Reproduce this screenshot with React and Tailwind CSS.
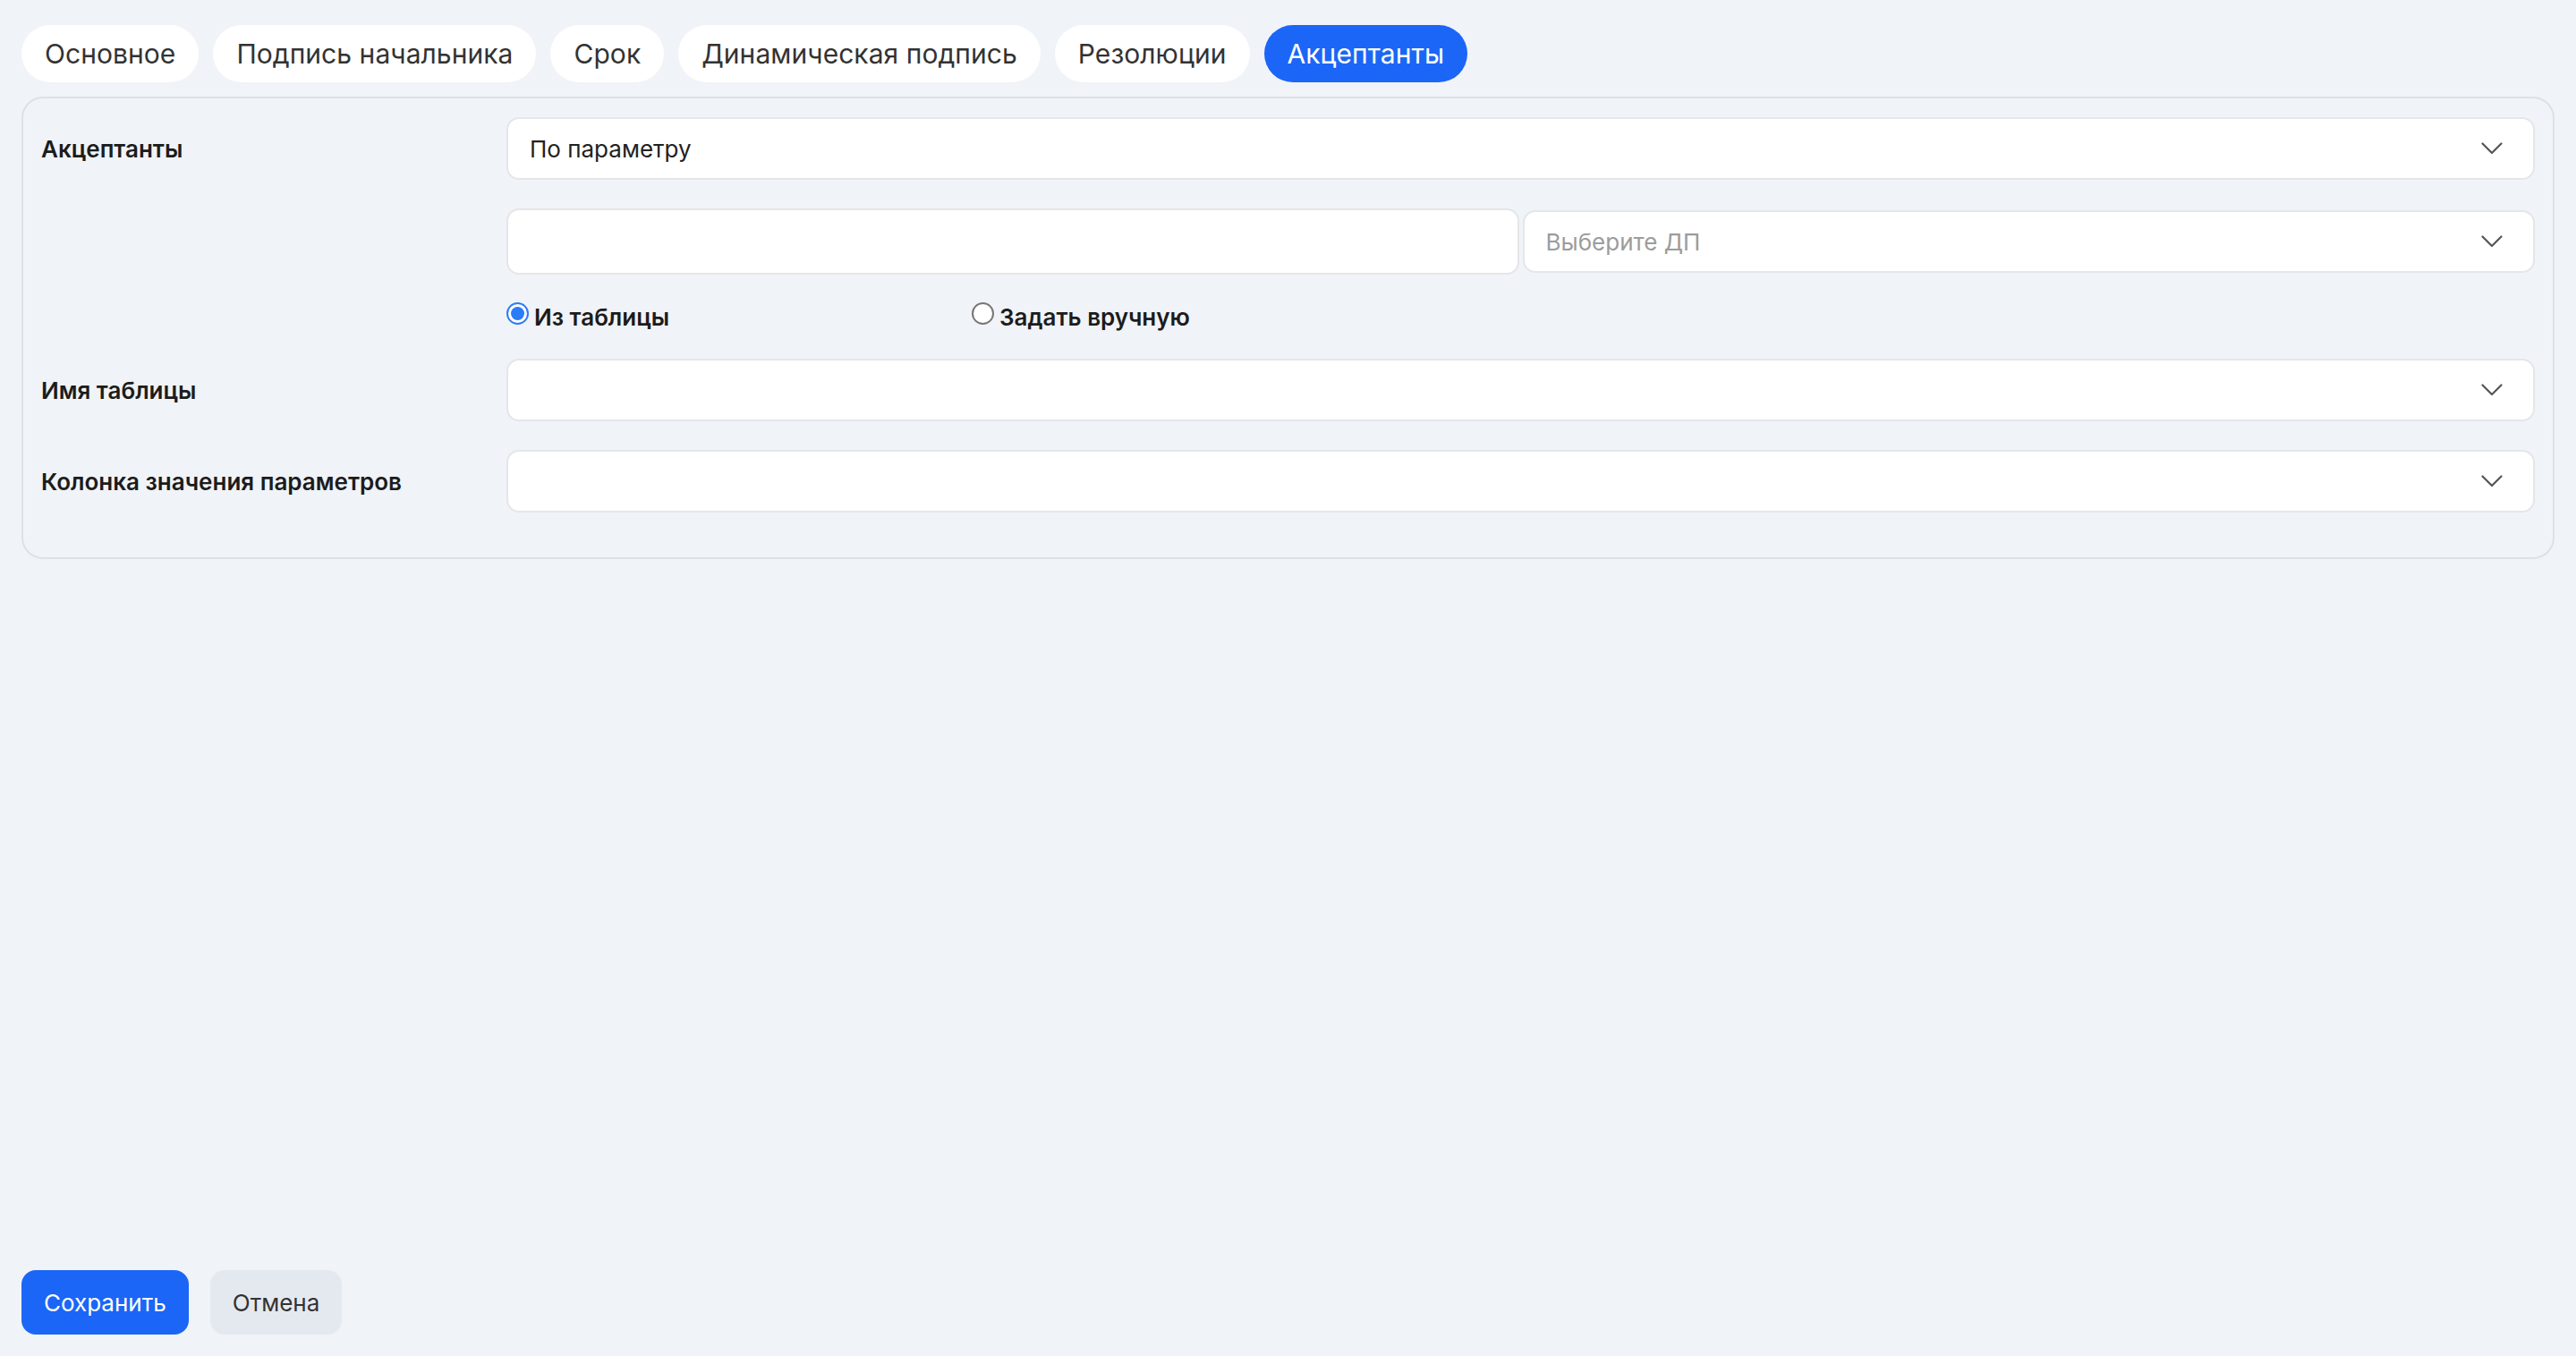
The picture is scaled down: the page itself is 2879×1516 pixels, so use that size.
import React from "react";

const tabs = ["Основное", "Подпись начальника", "Срок", "Динамическая подпись", "Резолюции", "Акцептанты"];

function Chevron() {
  return (
    <svg width="24" height="14" viewBox="0 0 24 14" fill="none" className="shrink-0">
      <path d="M1.5 1.5 L12 12 L22.5 1.5" stroke="#555" strokeWidth="2.2" strokeLinecap="round" strokeLinejoin="round" />
    </svg>
  );
}

function Select({ value, placeholder, className = "" }) {
  return (
    <div className={"flex h-[70px] min-w-0 items-center justify-between rounded-[14px] border-2 border-[#e4e6e9] bg-white pl-[24px] pr-[34px] " + className}>
      {value ? (
        <span className="text-[26px] text-[#222]">{value}</span>
      ) : (
        <span className="text-[26px] text-[#9c9c9c]">{placeholder || ""}</span>
      )}
      <Chevron />
    </div>
  );
}

function Label({ children }) {
  return <div className="w-[520px] shrink-0 text-[26px] font-semibold text-[#1c1c1c]">{children}</div>;
}

export default function App() {
  return (
    <div
      className="flex h-screen flex-col bg-[#f0f3f7] px-[24px] pt-[28px] pb-[24px]"
      style={{ fontFamily: "Inter, 'Noto Sans', sans-serif" }}
    >
      <div className="flex gap-[16px]">
        {tabs.map((t, i) => (
          <div
            key={t}
            className={
              "flex h-[64px] items-center rounded-full px-[26px] text-[30px] tracking-[0.05px] " +
              (i === tabs.length - 1 ? "bg-[#1b66f6] text-white" : "bg-white text-[#333]")
            }
          >
            {t}
          </div>
        ))}
      </div>

      <div className="mt-[16px] rounded-[24px] border-2 border-[#dde1e6] px-[20px] pt-[21px] pb-[50px]">
        <div className="flex items-center">
          <Label>Акцептанты</Label>
          <Select value="По параметру" className="flex-1" />
        </div>

        <div className="mt-[32px] flex items-center">
          <div className="w-[520px] shrink-0" />
          <div className="grid flex-1 grid-cols-2 items-center gap-[4px]">
            <div className="h-[74px] rounded-[14px] border-2 border-[#e4e6e9] bg-white" />
            <Select placeholder="Выберите ДП" />
          </div>
        </div>

        <div className="mt-[32px] flex">
          <div className="w-[520px] shrink-0" />
          <div className="flex w-[520px] items-start gap-[6px]">
            <div className="mt-[-1px] flex h-[25px] w-[25px] items-center justify-center rounded-full border-[2.5px] border-[#2a7cf7] bg-white">
              <div className="h-[15px] w-[15px] rounded-full bg-[#2a7cf7]" />
            </div>
            <span className="text-[26px] leading-[31px] font-semibold text-[#1c1c1c]">Из таблицы</span>
          </div>
          <div className="flex items-start gap-[6px]">
            <div className="mt-[-1px] h-[25px] w-[25px] rounded-full border-2 border-[#777] bg-white" />
            <span className="text-[26px] leading-[31px] font-semibold text-[#1c1c1c]">Задать вручную</span>
          </div>
        </div>

        <div className="mt-[31px] flex items-center">
          <Label>Имя таблицы</Label>
          <Select className="flex-1" />
        </div>

        <div className="mt-[32px] flex items-center">
          <Label>Колонка значения параметров</Label>
          <Select className="flex-1" />
        </div>
      </div>

      <div className="flex-1" />

      <div className="flex gap-[24px]">
        <button className="flex h-[72px] items-center rounded-[16px] bg-[#1b66f6] px-[25px] text-[26px] text-white">
          Сохранить
        </button>
        <button className="flex h-[72px] items-center rounded-[16px] bg-[#e4e9f0] px-[25px] text-[26px] text-[#333]">
          Отмена
        </button>
      </div>
    </div>
  );
}
